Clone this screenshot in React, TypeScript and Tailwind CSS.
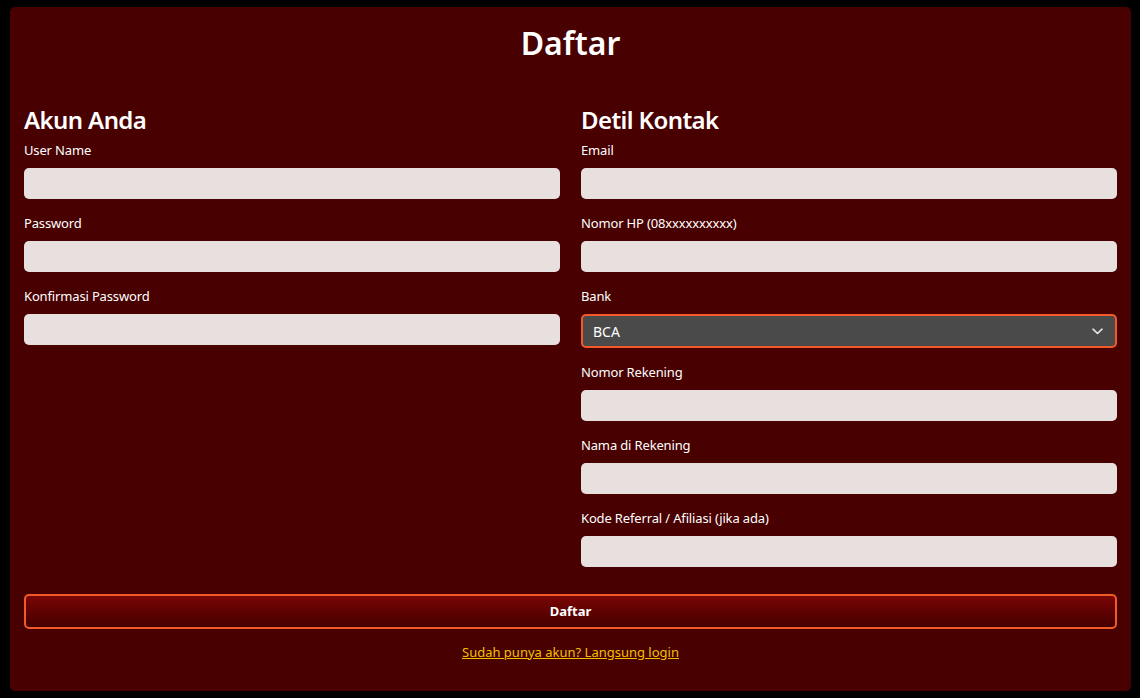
import React from "react";

const font = { fontFamily: '"Noto Sans", "Open Sans", sans-serif' };

function Field({ label }: { label: string }) {
  return (
    <div className="mb-[16px] flex flex-col">
      <label className="text-[13px] leading-[17px] tracking-[-0.15px] text-white">{label}</label>
      <input
        type="text"
        className="mt-[9px] h-[31px] w-full rounded-[5px] border-0 bg-[#e8e0df] px-3 text-[13px] text-black outline-none"
      />
    </div>
  );
}

function SelectField({ label, value }: { label: string; value: string }) {
  return (
    <div className="mb-[16px] flex flex-col">
      <label className="text-[13px] leading-[17px] tracking-[-0.15px] text-white">{label}</label>
      <div className="mt-[9px] flex h-[34px] w-full items-center justify-between rounded-[5px] border-2 border-[#f05a28] bg-[#4a4a4a] pl-[10px] pr-[12px] text-[14px] text-white">
        <span>{value}</span>
        <svg width="11" height="7" viewBox="0 0 11 7" fill="none">
          <path d="M1 1.2 L5.5 5.5 L10 1.2" stroke="#e6e6e6" strokeWidth="1.6" strokeLinecap="round" strokeLinejoin="round" />
        </svg>
      </div>
    </div>
  );
}

export default function App() {
  return (
    <div className="min-h-[698px] w-full bg-black pt-[7px] pb-[7px]" style={font}>
      <div className="ml-[10px] mr-[9px] h-[684px] rounded-[5px] bg-[#480000] px-[14px] pt-[17px]">
        <h1 className="text-center text-[32px] font-semibold leading-[38px] text-white">Daftar</h1>
        <div className="mt-[43px] grid grid-cols-2 gap-x-[21px]">
          <div>
            <h2 className="mb-[8px] text-[24px] font-semibold leading-[29px] tracking-[-0.6px] text-white">Akun Anda</h2>
            <Field label="User Name" />
            <Field label="Password" />
            <Field label="Konfirmasi Password" />
          </div>
          <div>
            <h2 className="mb-[8px] text-[24px] font-semibold leading-[29px] tracking-[-0.6px] text-white">Detil Kontak</h2>
            <Field label="Email" />
            <Field label="Nomor HP (08xxxxxxxxxx)" />
            <SelectField label="Bank" value="BCA" />
            <Field label="Nomor Rekening" />
            <Field label="Nama di Rekening" />
            <Field label="Kode Referral / Afiliasi (jika ada)" />
          </div>
        </div>
        <button className="mt-[11px] flex h-[35px] w-full items-center justify-center rounded-[5px] border-2 border-[#f05a28] bg-gradient-to-b from-[#7a0505] to-[#460000] text-[13px] font-bold text-white">
          Daftar
        </button>
        <div className="mt-[14px] text-center text-[13px] leading-[18px]">
          <a href="#" className="text-[#f0c000] underline">
            Sudah punya akun? Langsung login
          </a>
        </div>
      </div>
    </div>
  );
}
